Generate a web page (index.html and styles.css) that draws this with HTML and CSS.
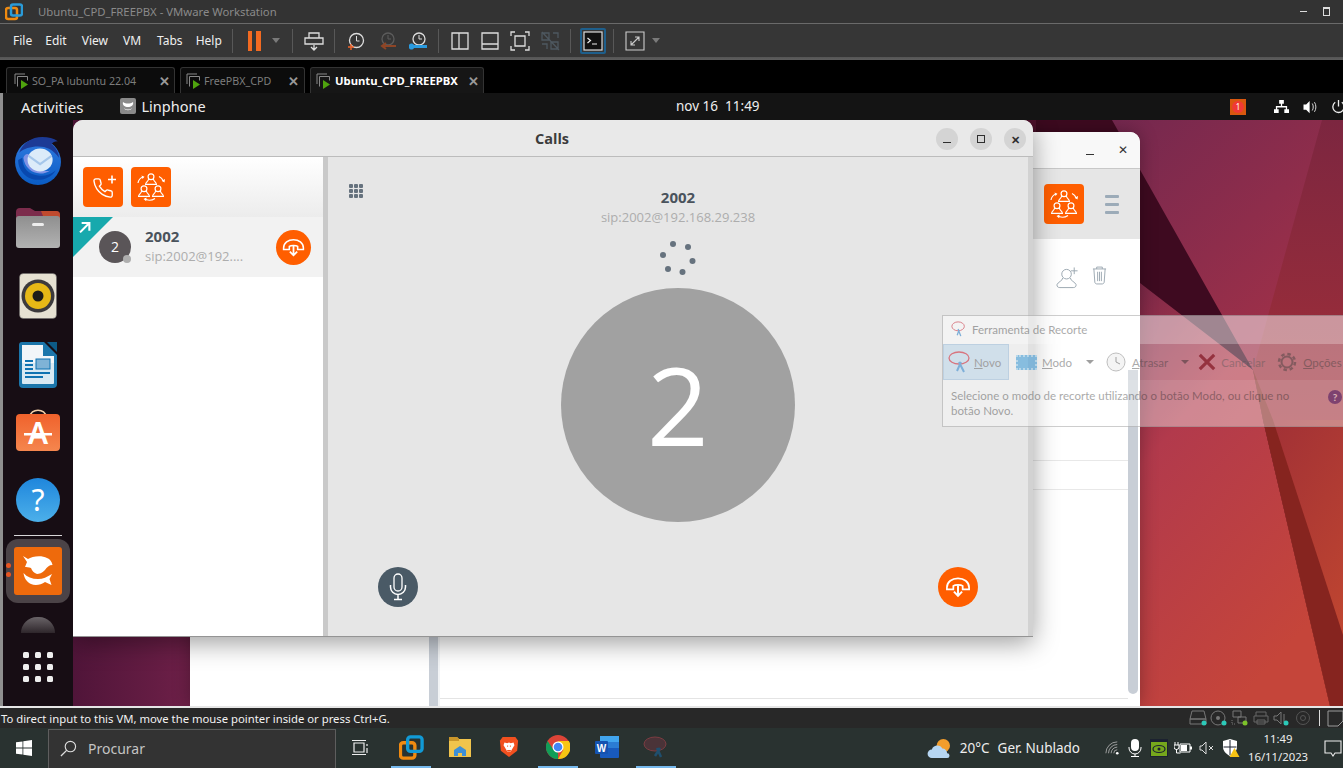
FILE: index.html
```html
<!DOCTYPE html>
<html lang="pt">
<head>
<meta charset="utf-8">
<title>Ubuntu_CPD_FREEPBX - VMware Workstation</title>
<link rel="stylesheet" href="styles.css">
</head>
<body>
<svg class="defs" width="0" height="0" aria-hidden="true">
  <defs>
    <symbol id="hangup" viewBox="0 0 24 24"><path d="M2.5 12.5C2.5 7.5 7 4.5 12 4.5s9.500 3 9.500 8v1.500h-5.500v-3c-1.500-1.200-6.500-1.200-8 0v3H2.500z" fill="none" stroke="#fff" stroke-width="1.500"/><path d="M12 10.500v9M8.500 16l3.500 3.500 3.500-3.500" fill="none" stroke="#fff" stroke-width="1.700"/></symbol>
    <symbol id="calladd" viewBox="0 0 40 40"><path transform="translate(9 10) scale(.92)" d="M22 16.920v3a2 2 0 0 1-2.180 2 19.790 19.790 0 0 1-8.630-3.070 19.500 19.500 0 0 1-6-6 19.790 19.790 0 0 1-3.070-8.670A2 2 0 0 1 4.110 2h3a2 2 0 0 1 2 1.720 12.840 12.840 0 0 0 .7 2.810 2 2 0 0 1-.45 2.110L8.090 9.910a16 16 0 0 0 6 6l1.270-1.270a2 2 0 0 1 2.110-.45 12.840 12.840 0 0 0 2.810.7A2 2 0 0 1 22 16.920z" fill="none" stroke="#fff" stroke-width="1.500"/><path d="M25 12.500h8M29 8.500v8" stroke="#fff" stroke-width="1.600"/></symbol>
    <symbol id="person" viewBox="0 0 12 12"><circle cx="6" cy="3.500" r="2.700" fill="none" stroke="#fff" stroke-width="1.100"/><path d="M3.800 5.500C3.500 8 1 8.500 1 10.500h10C11 8.500 8.500 8 8.200 5.500" fill="none" stroke="#fff" stroke-width="1.100"/></symbol>
    <symbol id="conf" viewBox="0 0 40 40"><use href="#person" x="13.500" y="6" width="13" height="13"/><use href="#person" x="6.500" y="18" width="13" height="13"/><use href="#person" x="20.500" y="18" width="13" height="13"/><path d="M7 16c.5-3 2-5 5-6M28 9.500c2 .8 3.500 2.500 4.500 5M15 32.500c3 1.200 6 1 9-1" fill="none" stroke="#fff" stroke-width="1.200"/><path d="M10.500 8.500l3 1.200-2 2.300zM34 12l-.5 3.500-2.800-1.800zM15.500 30.500l-.3 3.700-2.700-2.200z" fill="#fff"/></symbol>
    <linearGradient id="wpBase" x1="0" y1="0" x2="1" y2="0"><stop offset="0" stop-color="#3e0e30"/><stop offset=".14" stop-color="#6e2048"/><stop offset=".3" stop-color="#7a2048"/><stop offset="1" stop-color="#3c0a20"/></linearGradient>
    <linearGradient id="wpPink" x1="0" y1="0" x2=".7" y2="1"><stop offset="0" stop-color="#74284f"/><stop offset="1" stop-color="#a83247"/></linearGradient>
    <linearGradient id="wpSide" x1="0" y1="0" x2="0" y2="1"><stop offset="0" stop-color="#7c2640"/><stop offset="1" stop-color="#a22f38"/></linearGradient>
    <linearGradient id="wpRed" x1="0" y1="0" x2=".5" y2="1"><stop offset="0" stop-color="#7c2848"/><stop offset=".35" stop-color="#b23a4c"/><stop offset="1" stop-color="#c5453a"/></linearGradient>
    <linearGradient id="wpRight" x1="0" y1="0" x2=".4" y2="1"><stop offset="0" stop-color="#a03036"/><stop offset="1" stop-color="#c04630"/></linearGradient>
    <linearGradient id="tbBlue" x1="0" y1="0" x2="0" y2="1"><stop offset="0" stop-color="#2f7ae0"/><stop offset="1" stop-color="#0a5cc4"/></linearGradient>
    <linearGradient id="foldGrey" x1="0" y1="0" x2="0" y2="1"><stop offset="0" stop-color="#8f8f8f"/><stop offset="1" stop-color="#b2b2b2"/></linearGradient>
    <linearGradient id="bagOrange" x1="0" y1="0" x2="0" y2="1"><stop offset="0" stop-color="#f0622c"/><stop offset="1" stop-color="#f5864e"/></linearGradient>
    <linearGradient id="helpBlue" x1="0" y1="0" x2="0" y2="1"><stop offset="0" stop-color="#1f86dc"/><stop offset="1" stop-color="#4cb0ea"/></linearGradient>
  </defs>
</svg>

<div class="vmware">
  <header class="vm-title">
    <svg class="vm-logo" viewBox="0 0 18 18" width="18" height="18"><rect x="1" y="5" width="11" height="11" rx="2" fill="none" stroke="#f08a10" stroke-width="2.500"/><rect x="6" y="1.500" width="11" height="11" rx="2" fill="none" stroke="#2a9bd8" stroke-width="2.500"/></svg>
    <span class="vm-title-text">Ubuntu_CPD_FREEPBX - VMware Workstation</span>
    <span class="win-ctrls"><i class="win-min"></i><i class="win-max"></i></span>
  </header>

  <nav class="toolbar">
    <span class="menu m-file">File</span><span class="menu m-edit">Edit</span><span class="menu m-view">View</span><span class="menu m-vm">VM</span><span class="menu m-tabs">Tabs</span><span class="menu m-help">Help</span>
    <i class="sep sep-a"></i>
    <span class="pause"><i></i><i></i></span>
    <i class="caret"></i>
    <i class="sep sep-b"></i>
    <svg class="tool" viewBox="0 0 22 22"><path d="M6 3h10v5H6zM2 8h18v6H2zM11 15v4M8 17l3 3 3-3" fill="none" stroke="#ddd" stroke-width="1.300"/></svg>
    <i class="sep"></i>
    <svg class="tool" viewBox="0 0 22 22"><circle cx="11.500" cy="10.500" r="7" fill="none" stroke="#ddd" stroke-width="1.300"/><path d="M11.500 6v5h3" fill="none" stroke="#ddd"/><path d="M3 17h6M6 14v6" stroke="#f0642a" stroke-width="1.400"/></svg>
    <svg class="tool tool-wide" viewBox="0 0 22 22"><circle cx="11" cy="9" r="6" fill="none" stroke="#5c5c5c" stroke-width="1.300"/><path d="M11 5v4h3" fill="none" stroke="#5c5c5c"/><path d="M5 16h14M9 13l-4 3 4 3" fill="none" stroke="#8e4526" stroke-width="2"/></svg>
    <svg class="tool" viewBox="0 0 22 22"><circle cx="12" cy="9" r="6" fill="none" stroke="#ddd" stroke-width="1.300"/><path d="M12 5v4h3" fill="none" stroke="#ddd"/><path d="M2 15c1-2 4-2 5 0h13v3H7c-1 2-4 2-5 0" fill="#2a9be0"/></svg>
    <i class="sep"></i>
    <svg class="tool" viewBox="0 0 22 22"><path d="M3 3h16v16H3zM10 3v16" fill="none" stroke="#ddd" stroke-width="1.300"/></svg>
    <svg class="tool" viewBox="0 0 22 22"><path d="M3 3h16v16H3zM3 14h16" fill="none" stroke="#ddd" stroke-width="1.300"/></svg>
    <svg class="tool" viewBox="0 0 22 22"><path d="M2 6V2h4M16 2h4v4M20 16v4h-4M6 20H2v-4M6 6h10v10H6z" fill="none" stroke="#ddd" stroke-width="1.300"/></svg>
    <svg class="tool" viewBox="0 0 22 22"><path d="M3 3h7v7H3zM12 12h7v7h-7zM14 3h5v5M3 14h5v5M3 2l17 18" fill="none" stroke="#4e5860" stroke-width="1.300"/></svg>
    <i class="sep"></i>
    <span class="tool-active"><svg viewBox="0 0 20 20" width="20" height="20"><rect x="1" y="1" width="18" height="18" fill="#111" stroke="#ddd" stroke-width="1.200"/><path d="M4.500 7l3 2.500-3 2.500M9 13h5" fill="none" stroke="#eee" stroke-width="1.200"/></svg></span>
    <i class="sep"></i>
    <svg class="tool" viewBox="0 0 22 22"><path d="M2 2h18v18H2zM7 15l8-8M11 7h4v4M7 11v4h4" fill="none" stroke="#ccc" stroke-width="1.100"/></svg>
    <i class="caret"></i>
  </nav>

  <div class="tabs">
    <div class="tab tab-a"><svg class="tab-ico" viewBox="0 0 16 16"><path d="M1 11V1h10" fill="none" stroke="#888"/><path d="M3.500 13.500v-10h10v4" fill="none" stroke="#888"/><path d="M7 7l7 4.500-7 4.500z" fill="#4fa30e"/></svg><span class="tab-name">SO_PA lubuntu 22.04</span><span class="tab-x">✕</span></div>
    <div class="tab tab-b"><svg class="tab-ico" viewBox="0 0 16 16"><path d="M1 11V1h10" fill="none" stroke="#888"/><path d="M3.500 13.500v-10h10v4" fill="none" stroke="#888"/><path d="M7 7l7 4.500-7 4.500z" fill="#4fa30e"/></svg><span class="tab-name">FreePBX_CPD</span><span class="tab-x">✕</span></div>
    <div class="tab tab-c"><svg class="tab-ico" viewBox="0 0 16 16"><path d="M1 11V1h10" fill="none" stroke="#888"/><path d="M3.500 13.500v-10h10v4" fill="none" stroke="#888"/><path d="M7 7l7 4.500-7 4.500z" fill="#4fa30e"/></svg><span class="tab-name">Ubuntu_CPD_FREEPBX</span><span class="tab-x">✕</span></div>
  </div>

  <main class="stage">
    <svg class="wallpaper" viewBox="0 93 1340 613" preserveAspectRatio="none">
      <rect x="0" y="93" width="1340" height="613" fill="url(#wpBase)"/>
      <rect x="1033" y="93" width="307" height="613" fill="#3e0a20"/>
      <polygon points="1112,120 1343,120 1343,420 1253,370" fill="url(#wpPink)" transform="translate(-3 0)"/>
      <polygon points="1322,120 1343,120 1343,420 1263,420 1253,370" fill="url(#wpSide)" transform="translate(-3 0)"/>
      <polygon points="1137,283 1250,370 1260,420 1327,706 1137,706" fill="url(#wpRed)"/>
      <polygon points="1260,420 1343,420 1343,706 1327,706" fill="url(#wpRight)"/>
      <polygon points="1250,370 1270,420 1340,635 1340,706 1327,706 1260,420" fill="#86241f"/>
    </svg>

    <div class="top-panel">
      <span class="activities">Activities</span>
      <span class="app-menu"><svg class="app-menu-ico" viewBox="0 0 16 16"><rect width="16" height="16" rx="2" fill="#8a8a8a"/><path d="M3 4c3 2 7 2 10 0 1 3-2 5-5 5S2 7 3 4zM4 10c2 2 6 2 8 0-1 3-7 3-8 0z" fill="#fff"/></svg>Linphone</span>
      <span class="clock">nov 16&nbsp; 11:49</span>
      <span class="panel-right">
        <span class="notif"><i>1</i></span>
        <svg class="net-ico" viewBox="0 0 16 16"><path d="M5.500 1h5v4h-5zM0 11h5v4H0zM11 11h5v4h-5zM7.300 5h1.400v2.500H14V11h-1.400V9H3.400v2H2V7.500h5.300z" fill="#fff"/></svg>
        <svg class="vol-ico" viewBox="0 0 16 16"><path d="M0 5h3l4-4v14l-4-4H0z" fill="#fff"/><path d="M10 4c1.500 2 1.500 6 0 8M12.500 2.500c2.200 3 2.200 8 0 11" fill="none" stroke="#ddd" stroke-width="1.100"/></svg>
        <svg class="pow-ico" viewBox="0 0 16 16"><path d="M8 1v7M4.500 3.500a6 6 0 1 0 7 0" fill="none" stroke="#eee" stroke-width="1.400"/></svg>
      </span>
    </div>

    <div class="stage-body">
      <aside class="dock">
        <svg class="dock-ico thunder" viewBox="2 2 44 46"><circle cx="24" cy="26" r="22" fill="url(#tbBlue)"/><path d="M6 17C9 8 18 2 28 2c6 0 11 1 15 4-3 0-5 1-6 3 4 3 7 8 7 13-5-8-12-11-20-11-7 0-14 2-18 6z" fill="#1c3a96"/><path d="M5 24c0 11 9 20 21 19 7-1 12-4 15-9-5 4-11 6-17 5C15 38 9 32 9 22z" fill="#0848ae"/><path d="M10 22c1 9 8 15 16 15 4 0 7-1 10-3-8 2-18-2-20-14-1-3-5-2-6 2z" fill="#7f93e6"/><ellipse cx="26" cy="24" rx="12" ry="11" fill="#dcebf9"/><path d="M15 20l11 8 11-8" fill="none" stroke="#a5c6ea" stroke-width="2"/></svg>
        <svg class="dock-ico files" viewBox="0 0 46 44"><path d="M1 6a4 4 0 0 1 4-4h10l5 3h21a4 4 0 0 1 4 4v8H1z" fill="#7c2c4c"/><path d="M26 5h15a4 4 0 0 1 4 4v6H30z" fill="#c04a2e"/><rect x="1" y="10" width="44" height="32" rx="3" fill="url(#foldGrey)"/><rect x="17" y="17" width="12" height="3" rx="1.500" fill="#eee"/></svg>
        <svg class="dock-ico rhythm" viewBox="0 0 38 46"><rect x="0.500" y="0.500" width="37" height="45" rx="4" fill="#e6e1d2" stroke="#666" stroke-width=".5"/><circle cx="19" cy="23" r="16.500" fill="#3c3a3c"/><circle cx="19" cy="23" r="13" fill="#e6b816"/><circle cx="19" cy="23" r="5.500" fill="#1e1c18"/></svg>
        <svg class="dock-ico writer" viewBox="0 0 38 46"><path d="M3 0h22l13 13v29a4 4 0 0 1-4 4H4a4 4 0 0 1-4-4V3a3 3 0 0 1 3-3z" fill="#1b76ab"/><path d="M3 3h21v11h11v20H3z" fill="#f2f6f9"/><path d="M3 21v20a1 1 0 0 0 1 1h30a1 1 0 0 0 1-1V21z" fill="#d8e9f3"/><path d="M28 0l10 0v10z" fill="#0d5a86"/><path d="M6 18h8v2H6zM6 22h8v2H6zM6 26h8v2H6zM6 30h25v2H6zM6 34h18v2H6z" fill="#0f73b2"/><rect x="17" y="17" width="14" height="10" fill="#7fb3d6" stroke="#0f73b2"/></svg>
        <svg class="dock-ico store" viewBox="0 0 46 44"><path d="M15 9c0-9 16-9 16 0" fill="none" stroke="#f2d0a8" stroke-width="1.500"/><rect x="1" y="6" width="44" height="37" rx="4" fill="url(#bagOrange)"/><text x="23" y="36" class="store-a">A</text><rect x="9" y="25" width="28" height="2.500" fill="#fff"/></svg>
        <svg class="dock-ico help" viewBox="0 0 44 44"><circle cx="22" cy="22" r="22" fill="url(#helpBlue)"/><text x="22" y="33" class="help-q">?</text></svg>
        <i class="dock-sep"></i>
        <div class="dock-active">
          <i class="dock-dots"></i>
          <svg class="linphone-ico" viewBox="0 0 48 48"><rect width="48" height="48" rx="3" fill="#ee6a0c"/><path d="M9 9L14 12C18 9 28 8 33 11C36 12 38 15 38.500 18C35 18 33 20 31 23C28 26 25 27 23 27C20 26 18 24 17 21C15 20 12 20 11 20L13 15Z" fill="#fff"/><path d="M9.500 26C13 30 18 32 24 32C29 32 33 30 38 27L35.500 32L37.500 38L31 35C27 38 21 39 17 37C13 35 10 31 9.500 26Z" fill="#fff"/></svg>
        </div>
        <div class="dock-dome"></div>
        <div class="apps-grid"><i></i><i></i><i></i><i></i><i></i><i></i><i></i><i></i><i></i></div>
      </aside>

      <section class="desktop">
        <article class="lp-window">
          <div class="lp-title"><span class="lp-min"></span><span class="lp-close">✕</span></div>
          <div class="lp-header">
            <span class="orange-btn"><svg viewBox="0 0 40 40" width="40" height="40"><use href="#conf"/></svg></span>
            <span class="hamburger"><i></i><i></i><i></i></span>
          </div>
          <div class="lp-body">
            <div class="lp-side"></div>
            <div class="lp-split"></div>
            <div class="lp-main">
              <div class="lp-actions">
                <svg class="lp-act" viewBox="0 0 24 24" width="23" height="24"><circle cx="11" cy="8" r="5" fill="none" stroke="#9aa6b0"/><path d="M7 12c0 3-5 4-6 7 0 2 1 3 3 3h14c2 0 3-1 3-3-1-3-6-4-6-7" fill="none" stroke="#9aa6b0"/><path d="M19 1v7M15.500 4.500h7" stroke="#9aa6b0"/></svg>
                <svg class="lp-act" viewBox="0 0 16 20" width="15" height="19"><path d="M1 3h14M5 3V1h6v2M2 3l1 14c0 1 1 2 2 2h6c1 0 2-1 2-2l1-14M6 6v10M8 6v10M10 6v10" fill="none" stroke="#9aa6b0"/></svg>
              </div>
              <div class="lp-row"></div>
              <div class="lp-fill"></div>
            </div>
            <div class="lp-scroll"><i></i></div>
          </div>
        </article>

        <article class="calls">
          <header class="calls-title">
            <h1>Calls</h1>
            <span class="calls-ctrls">
              <span class="ctrl"><i class="c-min"></i></span>
              <span class="ctrl"><i class="c-max"></i></span>
              <span class="ctrl c-x">✕</span>
            </span>
          </header>
          <div class="calls-body">
            <div class="calls-side">
              <div class="side-tools">
                <span class="orange-btn"><svg viewBox="0 0 40 40" width="40" height="40"><use href="#calladd"/></svg></span>
                <span class="orange-btn"><svg viewBox="0 0 40 40" width="40" height="40"><use href="#conf"/></svg></span>
              </div>
              <div class="call-row">
                <span class="corner"><svg viewBox="0 0 16 16" width="13" height="13"><path d="M2.500 14L13 3.500M4.500 2.500h9.500v9.500" fill="none" stroke="#fff" stroke-width="2.600"/></svg></span>
                <span class="mini-avatar">2<i></i></span>
                <span class="call-info"><strong>2002</strong><small>sip:2002@192....</small></span>
                <span class="hang hang-sm"><svg viewBox="0 0 24 24" width="25" height="25"><use href="#hangup"/></svg></span>
              </div>
            </div>
            <div class="calls-split"></div>
            <div class="call-main">
              <div class="call-head">
                <span class="keypad"><i></i><i></i><i></i><i></i><i></i><i></i><i></i><i></i><i></i></span>
                <div class="peer"><strong>2002</strong><small>sip:2002@192.168.29.238</small></div>
              </div>
              <svg class="spinner" viewBox="0 0 40 36" width="40" height="36"><g fill="#66727e"><circle cx="15" cy="4" r="3"/><circle cx="30" cy="7" r="3"/><circle cx="5" cy="15" r="3"/><circle cx="34.500" cy="21" r="3"/><circle cx="10" cy="29" r="3"/><circle cx="24.500" cy="32" r="3"/></g></svg>
              <div class="big-avatar">2</div>
              <div class="call-foot">
                <span class="mic"><svg viewBox="0 0 24 32" width="24" height="32"><rect x="8" y="3" width="8" height="17" rx="4" fill="none" stroke="#fff" stroke-width="1.300"/><path d="M4.500 14v2a7.500 7.500 0 0 0 15 0v-2M12 23.500V28M8 28.500h8" fill="none" stroke="#fff" stroke-width="1.500"/></svg></span>
                <span class="hang hang-lg"><svg viewBox="0 0 24 24" width="28" height="28"><use href="#hangup"/></svg></span>
              </div>
            </div>
            <div class="calls-edge"></div>
          </div>
        </article>

        <article class="snip">
          <div class="snip-title"><svg viewBox="0 0 18 18" width="16" height="16"><ellipse cx="8" cy="6" rx="7" ry="5" fill="none" stroke="#d03040"/><path d="M8 9l3 8M9 10l-2 6" stroke="#3f8fd0" stroke-width="1.500"/></svg><span>Ferramenta de Recorte</span></div>
          <div class="snip-tools">
            <span class="snip-new"><svg viewBox="0 0 24 24" width="24" height="24"><ellipse cx="11" cy="8" rx="10" ry="6" fill="none" stroke="#d03040" stroke-width="1.300"/><path d="M11 12l5 10M13 12l-4 9" stroke="#3f8fd0" stroke-width="2"/></svg><span><u>N</u>ovo</span></span>
            <span class="snip-mode"><i class="snip-film"></i><span><u>M</u>odo</span><i class="snip-caret"></i></span>
            <span class="snip-delay"><svg viewBox="0 0 20 20" width="20" height="20"><circle cx="10" cy="10" r="9" fill="#eee" stroke="#999"/><path d="M10 5v5l4 2" fill="none" stroke="#666"/></svg><span><u>A</u>trasar</span><i class="snip-caret"></i></span>
            <span class="snip-cancel"><svg viewBox="0 0 20 20" width="18" height="18"><path d="M2 2l16 16M18 2L2 18" stroke="#8a3038" stroke-width="3.500"/></svg><span>Cancelar</span></span>
            <span class="snip-opts"><svg viewBox="0 0 20 20" width="20" height="20"><circle cx="10" cy="10" r="5.500" fill="none" stroke="#777" stroke-width="2"/><circle cx="10" cy="10" r="8" fill="none" stroke="#777" stroke-width="2.500" stroke-dasharray="3.500 2.800"/></svg><span><u>O</u>pções</span></span>
          </div>
          <div class="snip-help"><p>Selecione o modo de recorte utilizando o botão Modo, ou clique no botão Novo.</p><span class="snip-q">?</span></div>
        </article>
      </section>
    </div>
  </main>

  <div class="light-line"></div>
  <footer class="statusbar">
    <span class="status-text">To direct input to this VM, move the mouse pointer inside or press Ctrl+G.</span>
    <span class="status-icons">
      <svg viewBox="0 0 20 18" width="20" height="18"><path d="M4 2h12l2 8H2zM2 10h16v5H2z" fill="none" stroke="#777"/><circle cx="16" cy="14" r="2.500" fill="#2cc9b8"/></svg>
      <svg viewBox="0 0 20 18" width="20" height="18"><circle cx="9" cy="9" r="7" fill="none" stroke="#777"/><circle cx="9" cy="9" r="2" fill="#777"/><circle cx="15" cy="14" r="2.500" fill="#2cc9b8"/></svg>
      <svg viewBox="0 0 20 18" width="20" height="18"><path d="M3 2h8v6H3zM8 8h8v6H8z" fill="none" stroke="#777"/><path d="M2 11v4h4" fill="none" stroke="#777" stroke-dasharray="1 1"/><circle cx="15" cy="14" r="2.500" fill="#7dc32a"/></svg>
      <svg viewBox="0 0 20 18" width="20" height="18"><path d="M5 7V3h10v4M3 7h14v6H3zM6 11h8v4H6z" fill="none" stroke="#666"/></svg>
      <svg viewBox="0 0 20 18" width="20" height="18"><path d="M2 7h3l4-4v12l-4-4H2zM12 5v8" fill="none" stroke="#777"/><circle cx="14" cy="14" r="2.500" fill="#2cc9b8"/></svg>
      <svg viewBox="0 0 20 18" width="20" height="18"><circle cx="10" cy="9" r="6.500" fill="none" stroke="#555"/><circle cx="10" cy="9" r="2.500" fill="none" stroke="#555"/></svg>
      <i class="status-sep"></i>
      <svg viewBox="0 0 20 18" width="20" height="18"><path d="M2 2h15v10l-5 5H2z" fill="none" stroke="#999"/></svg>
    </span>
  </footer>

  <footer class="taskbar">
    <svg class="start" viewBox="0 0 16 16" width="16" height="16"><path d="M0 2.300L6.500 1.400v6.200H0zM7.300 1.300L16 0v7.600H7.300zM0 8.400h6.500v6.200L0 13.700zM7.300 8.400H16V16l-8.700-1.300z" fill="#fff"/></svg>
    <div class="search"><svg viewBox="0 0 18 18" width="17" height="17"><circle cx="11" cy="7" r="5.500" fill="none" stroke="#ddd" stroke-width="1.200"/><path d="M7 11l-6 6" stroke="#ddd" stroke-width="1.400"/></svg><span>Procurar</span></div>
    <svg class="taskview" viewBox="0 0 18 18" width="18" height="18"><path d="M3 4h10v9H3zM1 1.500h14M1 15.500h14M16 5v2M16 9v5" fill="none" stroke="#eee" stroke-width="1.200"/></svg>
    <span class="task active"><svg viewBox="0 0 26 26" width="25" height="25"><rect x="1.500" y="8" width="15" height="16" rx="3" fill="none" stroke="#f08a10" stroke-width="3.500"/><rect x="9" y="2" width="15" height="15" rx="3" fill="none" stroke="#119ad6" stroke-width="3.500"/></svg></span>
    <span class="task"><svg viewBox="0 0 24 22" width="24" height="22"><path d="M1 1h8l2 2h12v18H1z" fill="#f0c44c"/><path d="M1 1h8l2 2v2H1z" fill="#c9962a"/><path d="M6 14l6-4 6 4v6h-4v-3h-4v3H6z" fill="#3c8fd6"/></svg></span>
    <span class="task"><svg viewBox="0 0 22 24" width="20" height="24"><path d="M4 1h14l3 4-1 11-9 7-9-7L1 5z" fill="#f1501f"/><path d="M6 7l3 1 2-1 2 1 3-1 1 3-3 5-1 2h-4l-1-2-3-5z" fill="#fff"/><path d="M9 11h1M12 11h1M9 16h4" stroke="#f1501f" stroke-width="1.200"/></svg></span>
    <span class="task active"><svg viewBox="0 0 24 24" width="24" height="24"><circle cx="12" cy="12" r="12" fill="#dc4437"/><path d="M12 24a12 12 0 0 1-10.400-18L7 14l5 4z" fill="#119d58"/><path d="M12 6h10.900A12 12 0 0 1 12 24l5.200-9z" fill="#f8c513"/><circle cx="12" cy="12" r="5.500" fill="#fff"/><circle cx="12" cy="12" r="4.300" fill="#4286f5"/></svg></span>
    <span class="task"><svg viewBox="0 0 26 24" width="26" height="24"><rect x="6" y="1" width="19" height="22" rx="1" fill="#185abd"/><rect x="6" y="1" width="19" height="6" fill="#41a5ee"/><rect x="6" y="7" width="19" height="6" fill="#2b7cd3"/><rect x="1" y="6" width="13" height="13" rx="1" fill="#1553b0"/><text x="7.500" y="16.500" class="word-w">W</text></svg></span>
    <span class="task active"><svg viewBox="0 0 26 24" width="26" height="24"><ellipse cx="12" cy="9" rx="11" ry="7" fill="#4a3338" stroke="#7c3d42"/><path d="M14 13l4 9M17 13l-5 8" stroke="#1f4f6e" stroke-width="2.500"/></svg></span>

    <div class="tray">
      <svg class="weather" viewBox="0 0 26 22" width="25" height="21"><circle cx="17" cy="8" r="7" fill="#f29d2c"/><path d="M5 21a4.500 4.500 0 0 1 0-9 6 6 0 0 1 11-1 5 5 0 0 1 5 5 2.500 2.500 0 0 1 0 5z" fill="#b6d6f2"/></svg>
      <span class="temp">20°C</span>
      <span class="cond">Ger. Nublado</span>
      <svg class="t-wifi" viewBox="0 0 16 16" width="14" height="14"><path d="M1 14A13 13 0 0 1 14 1M4 14A10 10 0 0 1 14 4M7 14A7 7 0 0 1 14 7M10 14a4 4 0 0 1 4-4" fill="none" stroke="#aaa" stroke-width="1"/><circle cx="14" cy="14" r="1.500" fill="#fff"/></svg>
      <svg class="t-mic" viewBox="0 0 14 18" width="14" height="18"><rect x="3" y="0" width="8" height="12" rx="4" fill="#fff"/><path d="M1 8v1a6 6 0 0 0 12 0V8M7 15v2M3 17.500h8" fill="none" stroke="#fff"/></svg>
      <svg class="t-nv" viewBox="0 0 18 18" width="18" height="18"><rect width="18" height="18" fill="#1c2230"/><rect x="1" y="3" width="16" height="14" fill="#76a71c"/><ellipse cx="9" cy="10" rx="6" ry="3.500" fill="none" stroke="#1c2230" stroke-width="1.200"/><circle cx="9" cy="10" r="1.500" fill="#1c2230"/></svg>
      <svg class="t-bat" viewBox="0 0 18 14" width="18" height="14"><path d="M6 3h10v8H6z" fill="none" stroke="#fff"/><path d="M7 4h6v6H7zM16 5.500h2v3h-2z" fill="#fff"/><path d="M1 1v3M4 1v3M0 4h5v2a2.500 2.500 0 0 1-5 0zM2.500 8v4h4" fill="none" stroke="#fff"/></svg>
      <svg class="t-vol" viewBox="0 0 16 14" width="16" height="14"><path d="M1 5h2l4-4v12L3 9H1zM10 5l4 4M14 5l-4 4" fill="none" stroke="#ddd"/></svg>
      <svg class="t-shield" viewBox="0 0 18 18" width="18" height="18"><path d="M8 0l7 2v6c0 4-3 7-7 9-4-2-7-5-7-9V2z" fill="#fff"/><path d="M8 1v15M1.500 8h13" stroke="#1c2230"/><path d="M12.500 9l5 9h-10z" fill="#f7c314"/></svg>
      <div class="t-clock"><span>11:49</span><span>16/11/2023</span></div>
      <svg class="t-note" viewBox="0 0 18 18" width="18" height="18"><path d="M1 2h16v12h-6l-2 3-2-3H1z" fill="none" stroke="#eee" stroke-width="1.100"/></svg>
    </div>
  </footer>
</div>
</body>
</html>
```
FILE: styles.css
```css
* { box-sizing: border-box; }
html, body { margin: 0; padding: 0; height: 768px; overflow: hidden; background: #282828; }
i { display: block; font-style: normal; }
.defs { position: absolute; }
.vmware { width: 1343px; height: 768px; display: flex; flex-direction: column; font-family: "Noto Sans", "Open Sans", sans-serif; overflow: hidden; }

/* VMware chrome */
.vm-title { height: 24px; flex: none; display: flex; align-items: center; padding-left: 5px; background: #333; border-bottom: 1px solid #6a6a6a; }
.vm-logo { flex: none; }
.vm-title-text { margin-left: 15px; font-size: 11.300px; color: #8a8a8a; }
.win-ctrls { margin-left: auto; display: flex; align-items: center; gap: 16px; padding-right: 13px; }
.win-min { width: 7px; height: 1px; background: #ddd; }
.win-max { width: 7px; height: 9px; border: 1px solid #ddd; border-top-width: 2px; }

.toolbar { height: 33px; flex: none; display: flex; align-items: center; background: #363636; }
.menu { font-size: 12px; color: #f0f0f0; }
.m-file { margin-left: 13px; }
.m-edit { margin-left: 13px; }
.m-view { margin-left: 15px; }
.m-vm { margin-left: 15px; }
.m-tabs { margin-left: 16px; }
.m-help { margin-left: 13px; }
.sep { width: 1px; height: 24px; background: #585858; margin: 0 6px 0 5px; flex: none; }
.sep-a { margin-left: 10px; margin-right: 15px; }
.sep-b { margin-left: 12px; margin-right: 6px; }
.pause { display: flex; gap: 4px; width: 13px; flex: none; }
.pause i { width: 5px; height: 20px; background: #f26a21; }
.caret { width: 0; height: 0; border: 4px solid transparent; border-top: 5px solid #7a7a7a; border-bottom: 0; margin-left: 11px; flex: none; }
.tool { width: 22px; height: 22px; flex: none; margin: 0 4px; }
.tool-wide { margin-left: 6px; }
.tool + .caret { margin-left: 2px; }
.tool-active { width: 26px; height: 26px; flex: none; display: flex; align-items: center; justify-content: center; margin: 0 2px 0 3px; border: 2px solid #1e5f8c; border-radius: 2px; }

.tabs { height: 36px; flex: none; display: flex; align-items: flex-end; gap: 5px; padding-left: 6px; background: #000; border-top: 3px solid #dcdcdc; border-image: linear-gradient(#555, #eee, #555) 1; }
.tab { height: 26px; display: flex; align-items: center; padding-left: 7px; border: 1px solid #333; border-bottom: 0; border-radius: 3px 3px 0 0; background: #0c0c0c; font-size: 10.700px; color: #7c7c7c; }
.tab-a { width: 169px; }
.tab-b { width: 125px; padding-left: 5px; }
.tab-c { width: 174px; padding-left: 5px; background: #161616; color: #fff; font-weight: 700; font-size: 11.300px; }
.tab-ico { width: 16px; height: 16px; flex: none; margin-right: 2px; }
.tab-x { margin-left: auto; margin-right: 4px; font-size: 13px; font-weight: 700; color: #999; }
.tab-b .tab-x { margin-right: 5px; }
.tab-c .tab-name { margin-left: 1px; }

/* Guest stage */
.stage { position: relative; height: 613px; flex: none; display: flex; flex-direction: column; border-left: 3px solid #8f8f8f; overflow: hidden; }
.wallpaper { position: absolute; left: 0; top: 0; width: 1340px; height: 613px; }
.top-panel { position: relative; height: 27px; flex: none; display: flex; align-items: center; background: #141414; color: #eee; font-size: 15px; }
.activities { margin-left: 18px; }
.app-menu { margin-left: 36px; display: flex; align-items: center; gap: 6px; font-size: 14.500px; line-height: 18px; padding-bottom: 1px; }
.app-menu-ico { width: 16px; height: 16px; }
.clock { position: absolute; left: 673px; top: 4px; font-size: 13.500px; }
.panel-right { margin-left: auto; display: flex; align-items: center; }
.notif { width: 16px; height: 16px; background: #d9570f; display: flex; align-items: center; justify-content: center; margin-right: 28px; }
.notif i { width: 12px; height: 12px; border-radius: 50%; background: #f03a34; font-size: 8px; line-height: 12px; text-align: center; color: #fff; }
.net-ico { width: 15px; height: 15px; margin-right: 14px; }
.vol-ico { width: 15px; height: 14px; margin-right: 13px; }
.pow-ico { width: 15px; height: 15px; margin-right: -3px; }

.stage-body { position: relative; flex: 1; display: flex; min-height: 0; }
.dock { width: 70px; flex: none; display: flex; flex-direction: column; align-items: center; background: #170d14; }
.dock-ico { flex: none; display: block; }
.thunder { width: 48px; height: 48px; margin-top: 17px; }
.files { width: 46px; height: 44px; margin-top: 21px; }
.rhythm { width: 38px; height: 46px; margin-top: 23px; }
.writer { width: 38px; height: 46px; margin-top: 23px; }
.store { width: 46px; height: 44px; margin-top: 20px; }
.store-a { font: 600 30px "Noto Sans", sans-serif; fill: #fff; text-anchor: middle; }
.help { width: 44px; height: 44px; margin-top: 26px; }
.help-q { font: 400 30px "Noto Sans", sans-serif; fill: #fff; text-anchor: middle; }
.dock-sep { width: 48px; height: 1px; background: #d8d6d8; margin-top: 13px; flex: none; }
.dock-active { position: relative; width: 64px; height: 64px; margin-top: 3px; flex: none; border-radius: 12px; background: #4b4347; display: flex; align-items: center; justify-content: center; }
.linphone-ico { width: 48px; height: 48px; }
.dock-dots { position: absolute; left: 0; top: 24px; width: 5px; height: 5px; border-radius: 50%; background: #e95420; box-shadow: 0 9px 0 #e95420; }
.dock-dome { width: 34px; height: 16px; margin-top: 14px; flex: none; border-radius: 17px 17px 0 0; background: linear-gradient(#6a6468, #2e262b); }
.apps-grid { margin-top: 19px; display: grid; grid-template-columns: repeat(3, 6px); gap: 6px; flex: none; }
.apps-grid i { width: 6px; height: 6px; border-radius: 1.500px; background: #eee; }

.desktop { position: relative; flex: 1; overflow: hidden; }

/* Linphone main window (behind) */
.lp-window { position: absolute; left: 117px; top: 12px; width: 950px; height: 574px; display: flex; flex-direction: column; background: #fff; border-radius: 10px 10px 0 0; box-shadow: 0 0 18px rgba(0, 0, 0, .3); }
.lp-title { height: 37px; flex: none; display: flex; justify-content: flex-end; align-items: center; gap: 24px; padding-right: 12px; background: #f8f8f8; border-bottom: 1px solid #c8c8c8; border-radius: 10px 10px 0 0; }
.lp-min { width: 8px; height: 1px; background: #333; margin-top: 8px; }
.lp-close { font-size: 12px; color: #333; line-height: 12px; }
.lp-header { height: 70px; flex: none; display: flex; align-items: center; justify-content: flex-end; gap: 21px; padding-right: 21px; background: #e6e6e6; }
.hamburger { display: flex; flex-direction: column; gap: 5px; width: 14px; }
.hamburger i { height: 3px; border-radius: 1px; background: #9cabb8; }
.lp-body { flex: 1; display: flex; min-height: 0; background: #fff; }
.lp-side { width: 239px; flex: none; }
.lp-split { width: 11px; flex: none; background: #c8ced6; border-right: 2px solid #f2f4f6; }
.lp-main { flex: 1; display: flex; flex-direction: column; }
.lp-actions { height: 222px; flex: none; display: flex; align-items: flex-start; justify-content: flex-end; gap: 13px; padding: 27px 21px 0 0; border-bottom: 1px solid #e8e8e8; }
.lp-row { height: 29px; flex: none; border-bottom: 1px solid #e8e8e8; }
.lp-fill { height: 209px; flex: none; border-bottom: 1px solid #e4e4e4; }
.lp-scroll { width: 12px; flex: none; padding-top: 131px; padding-right: 2px; padding-bottom: 12px; display: flex; }
.lp-scroll i { flex: 1; border-radius: 0 0 5px 5px; background: #c8ced6; }

.orange-btn { width: 40px; height: 40px; flex: none; display: block; border-radius: 4px; background: #ff5e00; }
.orange-btn svg { display: block; }

/* Calls window */
.calls { position: absolute; left: 0; top: 0; width: 960px; height: 517px; display: flex; flex-direction: column; background: #e6e6e6; border-radius: 10px 10px 0 0; border-bottom: 1px solid #949494; box-shadow: 0 6px 26px rgba(0, 0, 0, .38); }
.calls-title { position: relative; height: 37px; flex: none; display: flex; align-items: center; justify-content: center; background: #e9e9e9; border-bottom: 1px solid #bcbcbc; border-radius: 10px 10px 0 0; }
.calls-title h1 { margin: 0 2px 0 0; font-size: 14.500px; font-weight: 700; font-family: "Open Sans", sans-serif; color: #3c3c3c; }
.calls-ctrls { position: absolute; right: 7px; top: 8px; display: flex; gap: 12px; }
.ctrl { width: 22px; height: 22px; border-radius: 50%; background: #d4d4d4; display: flex; align-items: center; justify-content: center; font-size: 11px; color: #2e2e2e; }
.c-min { width: 8px; height: 1px; background: #2e2e2e; margin-top: 6px; }
.c-max { width: 8px; height: 8px; border: 1px solid #2e2e2e; }
.c-x { font-weight: 700; }
.calls-body { flex: 1; display: flex; min-height: 0; font-family: "Open Sans", sans-serif; }
.calls-side { width: 250px; flex: none; background: #fff; display: flex; flex-direction: column; }
.side-tools { height: 60px; flex: none; display: flex; gap: 8px; padding: 10px; background: linear-gradient(#fff, #ececec); }
.call-row { position: relative; height: 60px; flex: none; display: flex; align-items: center; padding-left: 26px; background: #f2f2f2; }
.corner { position: absolute; left: 0; top: 0; width: 40px; height: 40px; background: #17a9ad; clip-path: polygon(0 0, 100% 0, 0 100%); }
.corner svg { display: block; margin: 4px 0 0 5px; }
.mini-avatar { position: relative; width: 32px; height: 32px; flex: none; border-radius: 50%; background: #5a5558; color: #fff; font-size: 14px; line-height: 32px; text-align: center; }
.mini-avatar i { position: absolute; right: 0; bottom: 0; width: 8px; height: 8px; border-radius: 50%; background: #aeaeae; }
.call-info { margin-left: 14px; display: flex; flex-direction: column; width: 131px; }
.call-info strong { font-size: 15px; line-height: 20px; color: #4a535c; margin-top: -2px; }
.call-info small { font-size: 13px; line-height: 21px; color: #adadad; }
.hang { border-radius: 50%; background: #ff5e00; display: flex; align-items: center; justify-content: center; flex: none; }
.hang-sm { width: 35px; height: 35px; }
.hang-lg { width: 40px; height: 40px; }
.calls-split { width: 5px; flex: none; background: #c9c9c9; }
.call-main { flex: 1; display: flex; flex-direction: column; align-items: center; background: #e6e6e6; }
.call-head { position: relative; width: 100%; flex: none; }
.keypad { position: absolute; left: 21px; top: 27px; display: grid; grid-template-columns: repeat(3, 4px); gap: 1px; }
.keypad i { width: 4px; height: 4px; border-radius: 1px; background: #66727e; }
.peer { display: flex; flex-direction: column; align-items: center; padding-top: 30px; }
.peer strong { font-size: 15px; line-height: 20px; color: #4a535c; }
.peer small { font-size: 13px; line-height: 20px; color: #adadad; }
.spinner { flex: none; margin-top: 13px; }
.big-avatar { width: 234px; height: 234px; flex: none; margin-top: 12px; border-radius: 50%; background: #a1a1a1; color: #fff; font-size: 108px; font-weight: 400; line-height: 234px; text-align: center; }
.call-foot { width: 100%; flex: none; display: flex; justify-content: space-between; align-items: center; padding: 0 50px; margin-top: 45px; }
.mic { width: 40px; height: 40px; border-radius: 50%; background: #4a5a66; display: flex; align-items: center; justify-content: center; }
.calls-edge { width: 5px; flex: none; background: #d2d2d2; }

/* Translucent snipping tool */
.snip { position: absolute; left: 869px; top: 195px; width: 410px; height: 112px; display: flex; flex-direction: column; background: rgba(255, 255, 255, .55); border: 1px solid #b0b0b0; border-right: 0; opacity: .62; font-family: Lato, "Noto Sans", sans-serif; font-size: 11.500px; color: #666; }
.snip-title { height: 28px; flex: none; display: flex; align-items: center; gap: 5px; padding: 0 0 2px 8px; background: rgba(255, 255, 255, .6); color: #777; }
.snip-tools { height: 36px; flex: none; display: flex; align-items: center; white-space: nowrap; color: #777; }
.snip-new { width: 66px; height: 36px; flex: none; display: flex; align-items: center; gap: 2px; padding-left: 4px; background: #c4dbee; border: 1px solid #a4c4de; }
.snip-mode { display: flex; align-items: center; gap: 5px; margin-left: 7px; }
.snip-film { width: 21px; height: 15px; background: #4ea4dc; border: 2px dotted #9fd0ee; }
.snip-caret { width: 0; height: 0; border: 4px solid transparent; border-top: 4px solid #666; border-bottom: 0; margin-left: 9px; }
.snip-delay { display: flex; align-items: center; gap: 6px; margin-left: 12px; }
.snip-delay .snip-caret { margin-left: 7px; }
.snip-cancel { display: flex; align-items: center; gap: 5px; margin-left: 9px; color: #8a8a8a; }
.snip-opts { display: flex; align-items: center; gap: 6px; margin-left: 12px; }
.snip-help { flex: 1; display: flex; align-items: flex-start; padding: 8px 0 0 8px; background: rgba(255, 255, 255, .2); color: #777; }
.snip-help p { margin: 0; width: 352px; line-height: 15px; }
.snip-q { width: 14px; height: 14px; margin: 2px 0 0 25px; border-radius: 50%; background: #6a4f92; color: #fff; font-size: 10px; font-weight: 700; line-height: 14px; text-align: center; flex: none; }

/* Host bars */
.light-line { height: 2px; flex: none; background: #e6e6e6; }
.statusbar { height: 20px; flex: none; display: flex; align-items: center; padding-left: 1px; background: #282828; color: #f2f2f2; font-size: 11.300px; }
.status-icons { margin-left: auto; display: flex; align-items: center; gap: 1px; margin-right: -3px; }
.status-sep { width: 1px; height: 16px; background: #ddd; margin: 0 5px; }
.taskbar { height: 40px; flex: none; display: flex; align-items: center; background: #293230; }
.start { margin-left: 16px; flex: none; }
.search { width: 288px; height: 39px; margin-left: 16px; flex: none; display: flex; align-items: center; gap: 11px; padding-left: 11px; background: #333; border: 1px solid #5e5e5e; border-bottom: 0; color: #c4c4c4; font-size: 14px; }
.taskview { margin-left: 15px; flex: none; }
.task { width: 40px; height: 40px; margin-left: 9px; flex: none; display: flex; align-items: center; justify-content: center; border-bottom: 2px solid transparent; }
.taskview + .task { margin-left: 22px; }
.task.active { border-bottom-color: #76b9ed; }
.tray { margin-left: auto; height: 40px; display: flex; align-items: center; color: #eee; font-size: 13.500px; }
.weather { flex: none; }
.temp { margin-left: 8px; }
.cond { margin-left: 8px; margin-right: 25px; }
.t-wifi, .t-mic, .t-nv, .t-bat, .t-vol, .t-shield { flex: none; }
.t-mic { margin-left: 9px; }
.t-nv { margin-left: 8px; }
.t-bat { margin-left: 6px; }
.t-vol { margin-left: 7px; }
.t-shield { margin-left: 7px; }
.t-clock { width: 60px; margin-left: 8px; display: flex; flex-direction: column; align-items: center; font-size: 11.300px; line-height: 18px; color: #eee; }
.t-note { margin: 0 1px 0 16px; flex: none; }

.word-w { font: 700 10px "Liberation Sans", sans-serif; fill: #fff; text-anchor: middle; }
```
